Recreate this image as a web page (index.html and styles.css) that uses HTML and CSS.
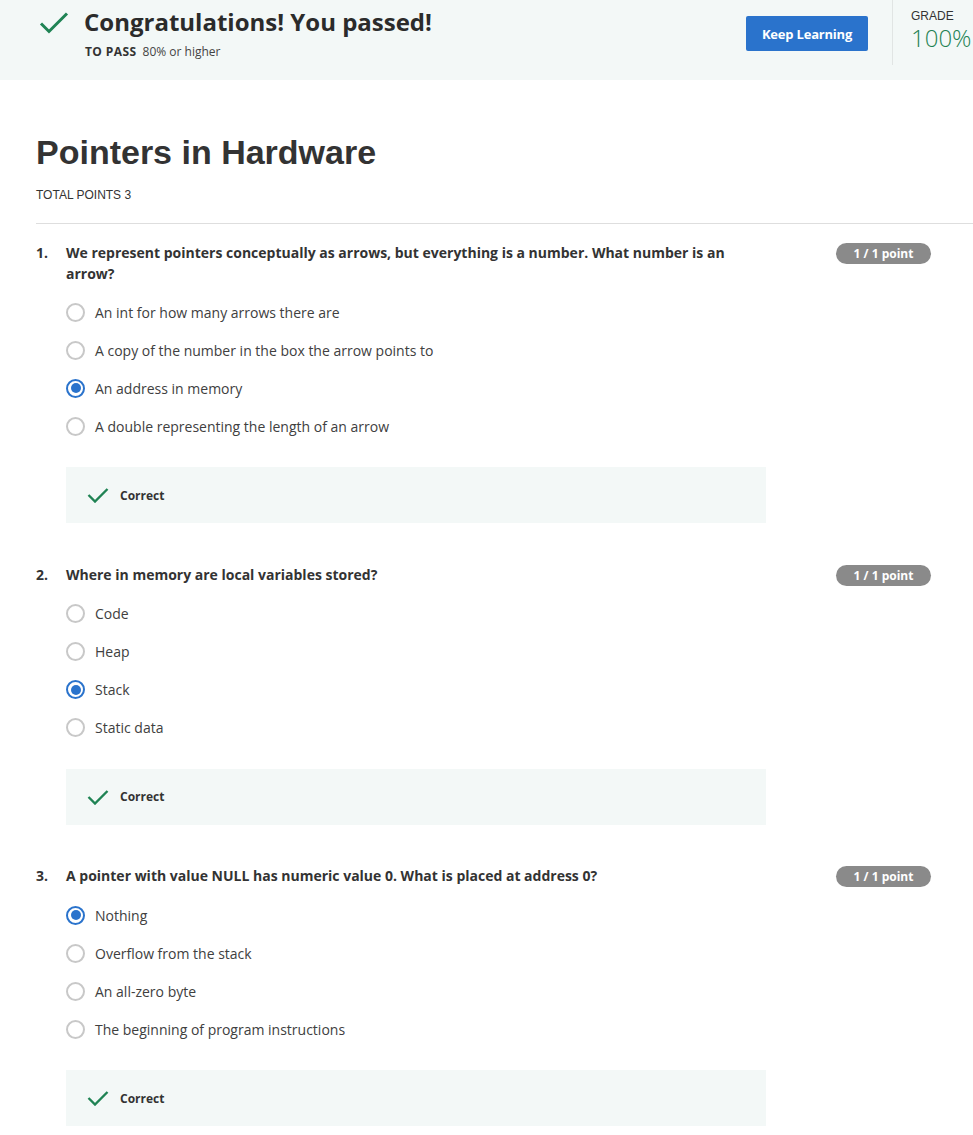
FILE: index.html
```html
<!DOCTYPE html>
<html lang="en">
<head>
<meta charset="utf-8">
<title>Pointers in Hardware</title>
<link rel="stylesheet" href="styles.css">
</head>
<body>
<header class="banner">
  <div class="banner-left">
    <svg class="big-check" width="30" height="24" viewBox="0 0 30 24"><polyline points="2,12.5 10,20.5 28,2.5" fill="none" stroke="#1f8354" stroke-width="3"/></svg>
    <div class="banner-text">
      <div class="congrats">Congratulations! You passed!</div>
      <div class="topass"><b>TO PASS</b> <span>80% or higher</span></div>
    </div>
  </div>
  <button class="keep">Keep Learning</button>
  <div class="grade">
    <div class="grade-label">GRADE</div>
    <div class="grade-value">100%</div>
  </div>
</header>

<main class="content">
  <h1 class="title">Pointers in Hardware</h1>
  <div class="total">TOTAL POINTS 3</div>
  <hr class="rule">

  <section class="question">
    <div class="q-head">
      <span class="q-num">1.</span>
      <p class="q-text">We represent pointers conceptually as arrows, but everything is a number. What number is an arrow?</p>
      <span class="badge">1 / 1 point</span>
    </div>
    <ul class="options">
      <li class="option"><span class="radio"></span>An int for how many arrows there are</li>
      <li class="option"><span class="radio"></span>A copy of the number in the box the arrow points to</li>
      <li class="option"><span class="radio checked"></span>An address in memory</li>
      <li class="option"><span class="radio"></span>A double representing the length of an arrow</li>
    </ul>
    <div class="feedback">
      <svg class="small-check" width="22" height="16" viewBox="0 0 22 16"><polyline points="1.5,8 8,14.5 20.5,2" fill="none" stroke="#1f8354" stroke-width="2.4"/></svg>
      <span>Correct</span>
    </div>
  </section>

  <section class="question">
    <div class="q-head">
      <span class="q-num">2.</span>
      <p class="q-text">Where in memory are local variables stored?</p>
      <span class="badge">1 / 1 point</span>
    </div>
    <ul class="options">
      <li class="option"><span class="radio"></span>Code</li>
      <li class="option"><span class="radio"></span>Heap</li>
      <li class="option"><span class="radio checked"></span>Stack</li>
      <li class="option"><span class="radio"></span>Static data</li>
    </ul>
    <div class="feedback">
      <svg class="small-check" width="22" height="16" viewBox="0 0 22 16"><polyline points="1.5,8 8,14.5 20.5,2" fill="none" stroke="#1f8354" stroke-width="2.4"/></svg>
      <span>Correct</span>
    </div>
  </section>

  <section class="question">
    <div class="q-head">
      <span class="q-num">3.</span>
      <p class="q-text">A pointer with value NULL has numeric value 0. What is placed at address 0?</p>
      <span class="badge">1 / 1 point</span>
    </div>
    <ul class="options">
      <li class="option"><span class="radio checked"></span>Nothing</li>
      <li class="option"><span class="radio"></span>Overflow from the stack</li>
      <li class="option"><span class="radio"></span>An all-zero byte</li>
      <li class="option"><span class="radio"></span>The beginning of program instructions</li>
    </ul>
    <div class="feedback">
      <svg class="small-check" width="22" height="16" viewBox="0 0 22 16"><polyline points="1.5,8 8,14.5 20.5,2" fill="none" stroke="#1f8354" stroke-width="2.4"/></svg>
      <span>Correct</span>
    </div>
  </section>
</main>
</body>
</html>
```

FILE: styles.css
```css
* { box-sizing: border-box; }

body {
  margin: 0;
  font-family: "Open Sans", "Liberation Sans", sans-serif;
  color: #1f1f1f;
  background: #fff;
}

.banner {
  height: 80px;
  background: #f3f8f7;
  display: flex;
  align-items: flex-start;
}

.banner-left {
  flex: 1;
  display: flex;
  align-items: flex-start;
  padding: 10px 0 0 39px;
}

.big-check { margin-top: 1px; }

.banner-text { margin-left: 15px; margin-top: -4px; }

.congrats {
  font-size: 24px;
  font-weight: 700;
  line-height: 32px;
  color: #2b2b2b;
}

.topass {
  font-size: 12px;
  line-height: 16px;
  margin-top: 6px;
  margin-left: 1px;
  color: #333;
}
.topass b { font-weight: 700; letter-spacing: 0.4px; }
.topass span { font-size: 12px; margin-left: 3px; color: #444; }

.keep {
  margin-top: 16px;
  margin-right: 24px;
  width: 122px;
  height: 35px;
  border: none;
  border-radius: 2px;
  background: #2a73cc;
  color: #fff;
  font-family: "Open Sans", sans-serif;
  font-size: 13px;
  font-weight: 700;
  letter-spacing: -0.2px;
}

.grade {
  height: 65px;
  width: 81px;
  border-left: 1px solid #e1e5e4;
  padding: 8px 0 0 18px;
  overflow: hidden;
  white-space: nowrap;
}

.grade-label {
  font-family: "Liberation Sans", Arial, sans-serif;
  font-size: 12px;
  line-height: 16px;
  color: #333;
}

.grade-value {
  font-family: "Open Sans", sans-serif;
  font-weight: 300;
  font-size: 24px;
  line-height: 28px;
  color: #1f8354;
}

.content { padding-left: 36px; }

.title {
  font-family: "Liberation Sans", Arial, sans-serif;
  font-weight: 700;
  font-size: 34px;
  line-height: 40px;
  color: #333;
  margin: 52px 0 0;
}

.total {
  font-family: "Liberation Sans", Arial, sans-serif;
  font-size: 12px;
  line-height: 16px;
  color: #333;
  margin-top: 15px;
}

.rule {
  border: none;
  border-top: 1px solid #dedede;
  margin: 20px 0 0;
}

.question { padding-right: 42px; }

.question:first-of-type { margin-top: 19px; }
.question + .question { margin-top: 41.5px; }

.q-head { display: flex; align-items: flex-start; }

.q-num {
  width: 30px;
  font-size: 14px;
  font-weight: 700;
  line-height: 20.5px;
  color: #333;
}

.q-text {
  margin: 0;
  width: 700px;
  font-size: 14px;
  font-weight: 700;
  line-height: 20.5px;
  color: #333;
}

.badge {
  margin-left: auto;
  height: 21px;
  width: 95px;
  border-radius: 11px;
  background: #8a8a8a;
  color: #fff;
  font-size: 12px;
  font-weight: 700;
  line-height: 21px;
  text-align: center;
}

.options {
  list-style: none;
  margin: 9px 0 0 30px;
  padding: 0;
}

.option {
  height: 38px;
  display: flex;
  align-items: center;
  font-size: 14px;
  color: #404040;
}

.radio {
  width: 19px;
  height: 19px;
  border: 2px solid #c8c8c8;
  border-radius: 50%;
  margin-right: 10px;
  flex: none;
  position: relative;
}

.radio.checked { border-color: #2a73cc; }

.radio.checked::after {
  content: "";
  position: absolute;
  left: 2.5px;
  top: 2.5px;
  width: 10px;
  height: 10px;
  border-radius: 50%;
  background: #2a73cc;
}

.feedback {
  margin: 22px 0 0 30px;
  width: 700px;
  height: 56px;
  background: #f3f8f7;
  display: flex;
  align-items: center;
  padding-left: 21px;
}

.feedback span {
  margin-left: 11px;
  font-size: 12px;
  font-weight: 700;
  color: #333;
}
```
